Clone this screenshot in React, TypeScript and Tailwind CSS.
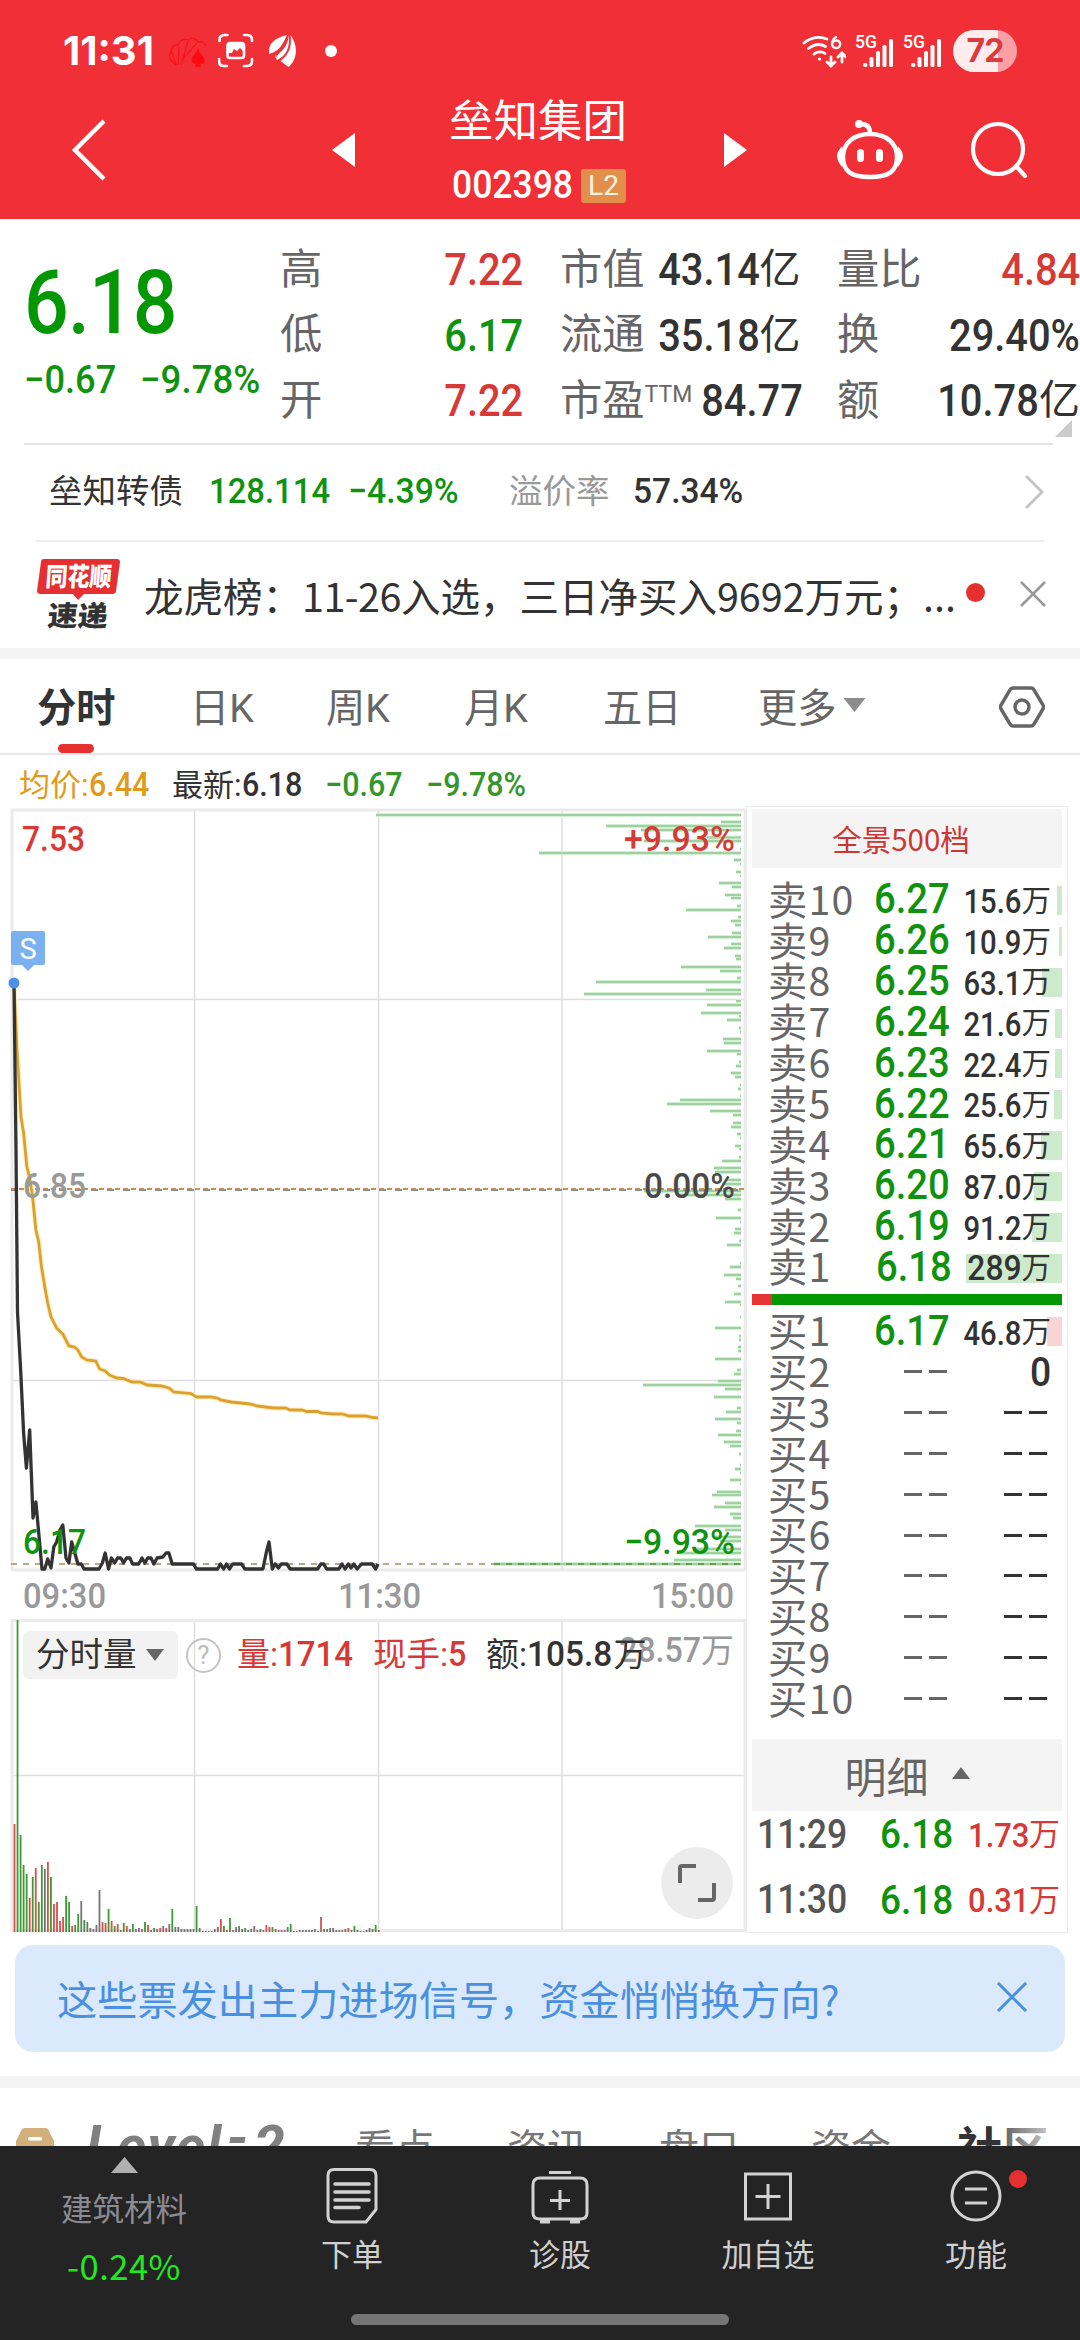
import type { ReactNode } from 'react'

const GREEN = '#0f930f'
const RED = '#d63936'

// [y, left edge] of each order-depth line, all of them end at x = 741
const DEPTH: [number, number][] = [
  [815, 376], [822, 721], [826, 606], [830, 641], [837.5, 707], [841, 644], [849, 740], [853, 539],
  [860, 734], [864, 740], [872, 736], [876, 740], [883, 719], [887, 732], [895, 725], [898, 731],
  [906, 737], [910, 686], [917, 738], [921, 731], [925, 735], [933, 732], [937, 708], [944, 731],
  [948, 724], [956, 735], [959, 736], [967, 681], [971, 720], [978, 737], [982, 596], [990, 706],
  [994, 584], [1001, 736], [1005, 707], [1013, 701], [1016, 739], [1020, 727], [1028, 739], [1032, 740],
  [1039, 723], [1043, 724], [1051, 707], [1054, 737], [1062, 739], [1066, 736], [1073, 731], [1077, 735],
  [1085, 740], [1089, 738], [1096, 740], [1100, 680], [1104, 667], [1111, 710], [1115, 733], [1123, 733],
  [1127, 731], [1134, 737], [1138, 740], [1146, 735], [1149, 739], [1157, 739], [1161, 722], [1168, 714],
  [1172, 715], [1180, 727], [1184, 722], [1191, 644], [1195, 680], [1199, 725], [1210, 738], [1218, 716],
  [1222, 740], [1229, 735], [1233, 734], [1241, 739], [1245, 727], [1263, 740], [1267, 730], [1275, 724],
  [1279, 736], [1286, 738], [1294, 734], [1302, 725], [1305, 740], [1317, 740], [1328, 715], [1336, 739],
  [1340, 739], [1347, 738], [1351, 738], [1359, 715], [1370, 737], [1374, 734], [1381, 718], [1385, 643],
  [1389, 725], [1397, 714], [1408, 737], [1412, 726], [1419, 715], [1423, 737], [1431, 736], [1435, 718],
  [1442, 724], [1446, 730], [1454, 739], [1465, 740], [1469, 735], [1473, 740], [1480, 730], [1484, 740],
  [1492, 717], [1495, 712], [1503, 725], [1507, 714], [1514, 730], [1518, 733], [1526, 695], [1530, 725],
  [1537, 713], [1541, 720], [1549, 697], [1553, 680], [1560, 674], [1564, 494],
]

const PRICE =
  '14,984 16,1150 17.5,1312 20.8,1373 23.6,1433 26.4,1468 29.7,1430 33,1518 35.9,1502 42,1569 44.8,1569 47.7,1559 51,1568 53.8,1547 56.6,1542 60,1530 62.8,1525 66,1558 68.9,1563 71.7,1542 77.9,1564 81.2,1564 84,1569 99,1569 102.4,1563 105.2,1553 108.5,1569 111.4,1558 114.7,1563 117.5,1558 120.8,1558 123.6,1563 126.5,1558 129.8,1558 132.6,1564 138.7,1564 142,1558 144.9,1563 147.7,1558 151,1558 153.8,1564 157.1,1558 162.8,1557 166.1,1553 168.9,1553 172.2,1564 193.5,1564 196.3,1569 217.6,1569 220.4,1564 223.7,1569 226.5,1564 229.4,1569 232.7,1564 241.6,1564 244.9,1569 262.9,1569 266.2,1553 269,1542 272.3,1569 275.1,1564 278.4,1568 281.3,1564 286.9,1564 290.2,1569 317.6,1569 320.9,1564 323.7,1564 326.6,1569 338.8,1569 342.1,1564 345,1569 348.3,1564 351.1,1568 353.9,1564 357.2,1569 361.5,1564 372.3,1564 375.6,1569 378,1564'

const AVERAGE =
  '14,984 17,1050 21,1117 23.6,1133 26.9,1167 29.7,1178 32.6,1197 35.9,1230 38.7,1242 41.5,1267 44.8,1287 47.7,1303 51,1317 56.6,1328 62.8,1334 68.9,1346 74.6,1347 77.9,1350 81.6,1357 86.8,1360 95.8,1361 99.6,1369 105.2,1371 109.5,1375 117,1378 123.2,1378.5 132.1,1382 140.2,1382 147.2,1385 161.4,1386 169,1388 173.7,1392 191.1,1393.5 196.3,1397 211.4,1397 218.5,1398.5 220.4,1400 231.2,1402 250.1,1404 257.2,1406 273.7,1408 285.5,1408 290.2,1410 302,1410 306.7,1411.5 317.6,1411.5 320.9,1413 332.7,1414 342.1,1414 349.2,1416 365.7,1416 372.8,1417.5 378,1418'

// one bar a minute: g = falling, r = rising, k = unchanged
const VOLUME =
  'r108 g312 g97 g67 g58 r34 g55 r64 g30 g67 k63 r70 g55 r28 r30 r11 r15 g36 g30 r6 g7 g18 k31 g12 k10 k4 k3 k7 k42 r10 r9 g23 r11 g6 r8 k2 g9 r6 k3 g8 k3 k4 r3 g10 r7 k2 g4 r3 r4 k6 r4 k8 g23 k5 k5 k3 k3 k3 k3 k3 g26 k4 k1 k1 k1 k1 k3 k5 r13 g6 r2 g14 r2 k5 k6 k3 g4 k2 k3 k6 k2 k3 k2 r7 r5 g5 r3 k2 r2 k2 k5 g8 k1 k1 k2 k2 k2 k2 k2 k3 k1 r15 k3 k3 k4 k4 k2 k2 r2 g3 r4 k2 g6 k2 r1 r1 k2 k4 k3 g7 r2'.split(' ')

const VOLUME_COLORS: Record<string, string> = { r: '#d6504c', g: '#3d9a34', k: '#757575' }

const SELLS = [
  { level: 10, price: '6.27', qty: '15.6', bar: 5 },
  { level: 9, price: '6.26', qty: '10.9', bar: 3 },
  { level: 8, price: '6.25', qty: '63.1', bar: 20 },
  { level: 7, price: '6.24', qty: '21.6', bar: 7 },
  { level: 6, price: '6.23', qty: '22.4', bar: 7 },
  { level: 5, price: '6.22', qty: '25.6', bar: 8 },
  { level: 4, price: '6.21', qty: '65.6', bar: 21 },
  { level: 3, price: '6.20', qty: '87.0', bar: 28 },
  { level: 2, price: '6.19', qty: '91.2', bar: 30 },
  { level: 1, price: '6.18', qty: '289', bar: 96 },
]

interface NumProps {
  children: ReactNode
  className?: string
  scale?: string
  right?: boolean
}

// condensed figures, anchored on the left or on the right
function Num({ children, className = '', scale = 'scale-x-[0.91]', right }: NumProps) {
  return (
    <span className={`inline-block font-medium whitespace-nowrap ${scale} ${right ? 'origin-right' : 'origin-left'} ${className}`}>
      {children}
    </span>
  )
}

function StatusBar() {
  return (
    <div className="h-[98px] pt-[3px] pl-[63px] pr-[63px] flex items-center text-white">
      <span className="w-[106px] text-[40px] leading-none font-bold font-['Inter']">11:31</span>
      <svg className="w-[38px] h-[32px]" viewBox="170 36 38 32" fill="none" stroke="#ff0a10" strokeWidth="1.4">
        <path d="M177 66c-6-4-8-9-5-13 0-5 4-8 7-7 2-5 7-7 10-5 4-3 9-1 10 2 4-1 7 1 8 4M177 66l-4-13M179 66l1-19M182 66l7-24M184 60l14-16" opacity="0.75" />
        <path d="M199 51c-2 5-6 7-6 10 0 3 4 4 5 2l-1 4h4l-1-4c2 2 6 1 5-2 0-3-4-5-6-10z" fill="#ff0a10" />
      </svg>
      <svg className="ml-[11px] w-[36px] h-[36px]" viewBox="219 34 36 36" fill="none" stroke="white" strokeWidth="2.6" strokeLinecap="round">
        <path d="M220.5 42v-1q0-5 5-5h3M245 36h3q5 0 5 5v1M253 60v2q0 5-5 5h-3M228 67h-3q-5 0-5-5v-2" />
        <rect x="228.500" y="44" width="16.500" height="15" rx="2.500" />
        <path d="M229 54v-9h16v8l-4-4-3 3-3-2-2 4z" fill="white" stroke="none" />
      </svg>
      <svg className="ml-[14px] w-[30px] h-[34px]" viewBox="269 34 30 34" fill="white">
        <path d="M288 35C276 38 270 43 270 51v3c8-2 14-8 18-19z" />
        <path d="M290 35c-1 11-8 18-14 21l2 4c9-4 13-12 12-25z" />
        <path d="M291.500 35c2 13-3 21-10 26l8 6c9-8 10-21 2-32z" />
        <path d="M289 35l-12 22" stroke="#f12f37" strokeWidth="1" />
      </svg>
      <span className="ml-[27px] size-[12px] rounded-full bg-white" />
      <svg className="ml-auto w-[46px] h-[36px]" viewBox="801 33 46 36" fill="none" stroke="white" strokeWidth="2.800" strokeLinecap="round">
        <path d="M805 43c7-6 16-7 23-4M809.5 48.500c6-4.500 12-5 17-2M815 54c3-2.500 8-3 11-.5" />
        <circle cx="820.5" cy="59" r="1.600" fill="white" stroke="none" />
        <path d="M837 37c-5 3-5.500 11 0 11 6 0 5-8 0-7.500-2 0-4 2-4 4" strokeWidth="2.400" />
        <path d="M832 57v8M828 62l4 4 4-4M843 62v-8M839 57l4-4 4 4" />
      </svg>
      <Signal />
      <Signal />
      <div className="ml-[11px] w-[64px] h-[42px] rounded-full overflow-hidden bg-[linear-gradient(to_right,#ffeced_70%,#faa0a4_70%)] flex items-center justify-center text-[32px] leading-none font-bold text-[#dc3a41] font-['Inter'] tracking-[-1px]">
        72
      </div>
    </div>
  )
}

function Signal() {
  return (
    <svg className="ml-[9px] w-[39px] h-[36px] overflow-visible" viewBox="856 33 39 36" fill="white">
      <text x="856" y="48" fontSize="18" fontWeight="500" textLength="22" lengthAdjust="spacingAndGlyphs">5G</text>
      <rect x="864" y="63" width="4.500" height="4" rx="2" />
      <rect x="870.5" y="57" width="4" height="10" rx="1.500" />
      <rect x="877" y="51" width="4" height="16" rx="1.500" />
      <rect x="883.5" y="45" width="4" height="22" rx="1.500" />
      <rect x="890" y="39" width="4" height="28" rx="1.500" />
    </svg>
  )
}

function NavBar() {
  return (
    <div className="h-[104px] pl-[70px] pr-[52px] flex items-center">
      <svg className="w-[38px] h-[62px]" viewBox="0 0 38 62" fill="none" stroke="white" strokeWidth="4.500">
        <path d="M34 2L5 31l29 29" />
      </svg>
      <svg className="ml-[224px] w-[23px] h-[34px]" viewBox="0 0 23 34" fill="white">
        <path d="M23 0v34L0 17z" />
      </svg>
      <div className="ml-[94px] mt-[3px] w-[180px] flex flex-col gap-[24px]">
        <h1 className="text-[44.500px] leading-none text-white whitespace-nowrap">垒知集团</h1>
        <div className="h-[35px] pl-[3px] flex items-center">
          <div className="w-[129px] text-[39px] leading-none text-white">
            <Num>002398</Num>
          </div>
          <span className="w-[45px] h-[34px] rounded-[3px] bg-[#e28f4b] flex items-center justify-center text-[28px] leading-none text-[#fff3e4]">L2</span>
        </div>
      </div>
      <svg className="ml-[95px] w-[23px] h-[34px]" viewBox="0 0 23 34" fill="white">
        <path d="M0 0v34l23-17z" />
      </svg>
      <svg className="ml-[90px] w-[67px] h-[62px]" viewBox="837 120 67 62" fill="none" stroke="white" strokeWidth="4.500">
        <path d="M870 135c16 0 27 9 27 23 0 15-9 20-27 20s-27-5-27-20c0-14 11-23 27-23z" />
        <path d="M870 134c0-6-3-9-9-9" />
        <circle cx="859" cy="125" r="4" fill="white" stroke="none" />
        <path d="M841 150q-6 7 0 15zM899 150q6 7 0 15z" fill="white" strokeWidth="2" />
        <path d="M860.500 153.500v6M879.500 153.500v6" strokeWidth="7" strokeLinecap="round" />
      </svg>
      <svg className="ml-auto w-[58px] h-[58px]" viewBox="970 122 58 58" fill="none" stroke="white" strokeWidth="4.200">
        <circle cx="998" cy="150" r="25" />
        <path d="M1016 167l9 10" strokeLinecap="round" />
      </svg>
    </div>
  )
}

function Stat({ label, value, unit, tone = 'text-[#333]' }: { label: ReactNode; value: string; unit?: string; tone?: string }) {
  return (
    <div className="flex items-center justify-between h-[65.500px] whitespace-nowrap">
      <span className="text-[42.300px] leading-none text-[#666]">{label}</span>
      <span className={`flex items-center text-[45px] leading-none ${tone}`}>
        <Num right scale="scale-x-[0.885]">{value}</Num>
        {unit && <span className="text-[41px]">{unit}</span>}
      </span>
    </div>
  )
}

function Quote() {
  return (
    <section className="relative h-[226px] pt-[18px] pl-[24px] flex">
      <div className="w-[256px] pt-[21px] text-[#0f930f] whitespace-nowrap">
        <div className="text-[89px] leading-[90px] text-[#039803]">
          <Num scale="scale-x-[0.885]" className="tracking-[-1px]">6.18</Num>
        </div>
        <div className="mt-[12px] flex text-[39px] leading-[40px]">
          <div className="w-[116px]">
            <Num scale="scale-x-[0.93]">−0.67</Num>
          </div>
          <Num scale="scale-x-[0.94]">−9.78%</Num>
        </div>
      </div>
      <div className="grid grid-cols-[243px_240px_243px] gap-x-[37px] content-start">
        <Stat label="高" value="7.22" tone="text-[#d63936]" />
        <Stat label="市值" value="43.14" unit="亿" />
        <Stat label="量比" value="4.84" tone="text-[#d63936]" />
        <Stat label="低" value="6.17" tone="text-[#0f930f]" />
        <Stat label="流通" value="35.18" unit="亿" />
        <Stat label="换" value="29.40%" />
        <Stat label="开" value="7.22" tone="text-[#d63936]" />
        <Stat label={<>市盈<sup className="mr-[-4px] text-[23px] top-[-13px]">TTM</sup></>} value="84.77" />
        <Stat label="额" value="10.78" unit="亿" />
      </div>
      <svg className="absolute right-[8px] bottom-[8px] w-[17px] h-[17px]" viewBox="0 0 17 17" fill="#ccc">
        <path d="M17 0v17H0z" />
      </svg>
      <div className="absolute left-[24px] right-[27px] bottom-0 h-[2px] bg-[#e3e3e3]" />
    </section>
  )
}

function BondRow() {
  return (
    <section className="h-[97px] mx-[36px] border-b-2 border-[#eee] pl-[13px] pb-[2px] flex items-center text-[35.500px] leading-none whitespace-nowrap">
      <span className="w-[160px] text-[33.500px] text-[#333]">垒知转债</span>
      <div className="w-[139px] text-[#0f930f]"><Num scale="scale-x-[0.925]">128.114</Num></div>
      <div className="w-[161px] text-[#0f930f]"><Num scale="scale-x-[0.95]">−4.39%</Num></div>
      <span className="w-[124px] text-[33.500px] text-[#999]">溢价率</span>
      <div className="text-[#333]"><Num scale="scale-x-[0.945]">57.34%</Num></div>
      <svg className="ml-auto w-[19px] h-[34px]" viewBox="0 0 19 34" fill="none" stroke="#c4c4c4" strokeWidth="3">
        <path d="M1 1l16 16L1 33" />
      </svg>
    </section>
  )
}

function NewsRow() {
  return (
    <section className="h-[106px] pl-[37px] pr-[34px] flex items-center">
      <svg className="mt-[-3px] w-[84px] h-[72px] overflow-visible" viewBox="0 0 84 72">
        <path d="M7 1h73q3 0 3 3l-4 29q0 3-4 3H47l-6 6-5-6H4q-4 0-4-3L4 4q0-3 3-3z" fill="#e52f30" />
        <text x="10" y="28" fontSize="26" fontWeight="900" fill="white" textLength="66" lengthAdjust="spacingAndGlyphs" transform="skewX(-4)">同花顺</text>
        <text x="16" y="68" fontSize="28" fontWeight="900" fill="#333" textLength="60" lengthAdjust="spacingAndGlyphs" transform="skewX(-5)">速递</text>
      </svg>
      <span className="ml-[23px] w-[822px] text-[39.500px] leading-none text-[#333] whitespace-nowrap font-['Noto_Sans_CJK_SC']">
        龙虎榜：<span className="tracking-[-0.500px]">11-26</span>入选，三日净买入9692万元；...
      </span>
      <span className="mt-[-6px] size-[19px] rounded-full bg-[#e63030]" />
      <svg className="ml-auto mt-[-3px] w-[26px] h-[26px]" viewBox="0 0 26 26" stroke="#999" strokeWidth="2.500">
        <path d="M1 1l24 24M25 1L1 25" />
      </svg>
    </section>
  )
}

function PeriodTabs() {
  return (
    <nav className="relative h-[96px] pt-[7px] pl-[37px] pr-[35px] flex items-center border-b-2 border-[#e6e6e6] text-[39.300px] leading-none text-[#666] whitespace-nowrap">
      <span className="w-[153px] font-bold text-[#333]">分时</span>
      <span className="w-[136px]">日K</span>
      <span className="w-[138px]">周K</span>
      <span className="w-[139px]">月K</span>
      <span className="w-[155px]">五日</span>
      <span>更多</span>
      <svg className="ml-[6px] mt-[-9px] w-[23px] h-[14px]" viewBox="0 0 22 14" fill="#8c8c8c">
        <path d="M0 0h22L11 14z" />
      </svg>
      <svg className="ml-auto mt-[-6px] w-[46px] h-[44px]" viewBox="0 0 46 44" fill="none" stroke="#666" strokeWidth="3.500">
        <path d="M14 3h18q2 0 3 2l9 15q1 2 0 4l-9 15q-1 2-3 2H14q-2 0-3-2L2 24q-1-2 0-4l9-15q1-2 3-2z" />
        <circle cx="23" cy="22" r="7" />
      </svg>
      <span className="absolute left-[58px] bottom-0 w-[36px] h-[9px] rounded-full bg-[#e63030]" />
    </nav>
  )
}

function Summary() {
  return (
    <div className="h-[51px] pt-[8px] pl-[19px] flex items-center text-[33.500px] leading-none whitespace-nowrap">
      <div className="w-[153px] text-[#e09a1a]"><span className="text-[31px]">均价:</span><Num>6.44</Num></div>
      <div className="w-[153px] text-[#333]"><span className="text-[31px]">最新:</span><Num>6.18</Num></div>
      <div className="w-[101px] text-[#35952b]"><Num>−0.67</Num></div>
      <div className="text-[#35952b]"><Num>−9.78%</Num></div>
    </div>
  )
}

function Grid({ top, bottom, lines }: { top: number; bottom: number; lines: number[] }) {
  return (
    <g fill="none" stroke="#dedede" strokeWidth="1.500">
      {[194.5, 378.5, 562].map((x) => (
        <path key={x} d={`M${x} ${top}V${bottom}`} />
      ))}
      {lines.map((y) => (
        <path key={y} d={`M12 ${y}H746`} />
      ))}
      <rect x="12" y={top} width="733" height={bottom - top} stroke="#ebebeb" strokeWidth="3" />
    </g>
  )
}

function Label({ x, y, w, fill, children }: { x: number; y: number; w: number; fill: string; children: string }) {
  return (
    <text x={x} y={y} fontSize="35.500" fontWeight="500" fill={fill} textLength={w} lengthAdjust="spacingAndGlyphs">
      {children}
    </text>
  )
}

function PriceChart() {
  return (
    <svg className="block w-[746px] h-[814px]" viewBox="0 806 746 814">
      <Grid top={810} bottom={1570} lines={[999.5, 1380.5]} />
      {DEPTH.map(([y, x]) => (
        <g key={y}>
          <rect x={x} y={y - 2} width={741 - x} height="4" fill="#d2f1d2" />
          <rect x={x} y={y - 1} width={741 - x} height="2" fill="#a0cfa2" />
        </g>
      ))}
      <path d="M11 1190H746" stroke="#8a8a8a" strokeWidth="2" strokeDasharray="7 9" />
      <path d="M11 1189H746" stroke="#cf8a4e" strokeWidth="2" strokeDasharray="5 3" />
      <path d="M11 1564H494" stroke="#b8a888" strokeWidth="2" strokeDasharray="6 6" />
      <path d="M494 1564H741" stroke="#6f9a52" strokeWidth="2" strokeDasharray="6 6" />
      <polyline points={AVERAGE} fill="none" stroke="#fdf0c4" strokeWidth="5" />
      <polyline points={AVERAGE} fill="none" stroke="#dca02c" strokeWidth="2.800" />
      <polyline points={PRICE} fill="none" stroke="#333" strokeWidth="3.300" strokeLinejoin="round" />
      <circle cx="14" cy="983" r="5.500" fill="#4b92e4" />
      <path d="M13 931h30q2 0 2 2v30q0 2-2 2H34l-6 6-6-6H13q-2 0-2-2V933q0-2 2-2z" fill="#7cb1f1" />
      <text x="28" y="959" fontSize="29" fill="white" textAnchor="middle">S</text>
      <Label x={22} y={851} w={63} fill={RED}>7.53</Label>
      <Label x={624} y={851} w={111} fill={RED}>+9.93%</Label>
      <Label x={23} y={1198} w={63} fill="#999">6.85</Label>
      <Label x={644} y={1198} w={91} fill="#4a4a4a">0.00%</Label>
      <Label x={23} y={1554} w={63} fill={GREEN}>6.17</Label>
      <Label x={624} y={1554} w={111} fill={GREEN}>−9.93%</Label>
      <Label x={23} y={1608} w={83} fill="#999">09:30</Label>
      <Label x={338} y={1608} w={83} fill="#999">11:30</Label>
      <Label x={651} y={1608} w={83} fill="#999">15:00</Label>
    </svg>
  )
}

function VolumeChart() {
  return (
    <div className="relative">
      <svg className="block w-[746px] h-[314px]" viewBox="0 1619 746 314">
        <Grid top={1620.5} bottom={1930.5} lines={[1775.5]} />
        {VOLUME.map((bar, i) => {
          const height = Number(bar.slice(1))
          return <rect key={i} x={13.6 + i * 3.035} y={1932 - height} width="1.800" height={height} fill={VOLUME_COLORS[bar[0]]} />
        })}
        <Label x={619} y={1662} w={82} fill="#999">28.57</Label>
        <text x="701" y="1662" fontSize="33" fill="#999">万</text>
      </svg>
      <div className="absolute left-[23px] top-[12px] h-[48px] flex items-center text-[35.500px] leading-none whitespace-nowrap">
        <span className="w-[155px] h-[48px] rounded-md bg-[#f2f2f2] pl-[13px] flex items-center gap-[9px] text-[33.500px] text-[#333]">
          分时量
          <svg className="w-[18px] h-[12px]" viewBox="0 0 18 12" fill="#666">
            <path d="M0 0h18L9 12z" />
          </svg>
        </span>
        <span className="ml-[8px] size-[35px] rounded-full border-[2.500px] border-[#c4c4c4] flex items-center justify-center text-[26px] text-[#bbb]">?</span>
        <div className="ml-[16px] w-[136px] text-[#d63936]"><span className="text-[33px]">量:</span><Num scale="scale-x-[0.93]">1714</Num></div>
        <div className="w-[113px] text-[#d63936]"><span className="text-[33.500px]">现手:</span><Num>5</Num></div>
        <div className="text-[#333]"><span className="text-[33px]">额:</span><Num scale="scale-x-[0.94]">105.8</Num><span className="ml-[-4px] text-[33px]">万</span></div>
      </div>
      <button className="absolute left-[661px] top-[228px] size-[72px] rounded-full bg-[#ececec] flex items-center justify-center">
        <svg className="w-[38px] h-[38px]" viewBox="0 0 38 38" fill="none" stroke="#666" strokeWidth="4">
          <path d="M2 19V4q0-2 2-2h14M36 19v15q0 2-2 2H20" />
        </svg>
      </button>
    </div>
  )
}

function Level({ name, price, qty, unit, children }: { name: string; price?: string; qty: ReactNode; unit?: boolean; children?: ReactNode }) {
  return (
    <div className="relative h-[40.850px] pl-[16px] pr-[11px] flex items-center leading-none whitespace-nowrap">
      {children}
      <span className="relative top-[-2px] w-[108px] text-[39.300px] text-[#666] tracking-[1.200px] font-['Noto_Sans_CJK_SC']">{name}</span>
      {price ? (
        <Num className="relative w-[84px] text-[42px] text-[#0f930f]">{price}</Num>
      ) : (
        <Dashes className="ml-[28px]" color="bg-[#666]" />
      )}
      <span className="relative ml-auto flex items-center text-[#333]">
        {qty}
        {unit && <span className="pt-[4px] text-[29.500px]">万</span>}
      </span>
    </div>
  )
}

function Dashes({ className = '', color }: { className?: string; color: string }) {
  return (
    <span className={`flex gap-[7px] ${className}`}>
      <span className={`w-[18px] h-[3px] ${color}`} />
      <span className={`w-[18px] h-[3px] ${color}`} />
    </span>
  )
}

function OrderBook() {
  return (
    <aside className="w-[322px] h-[1127px] border-[1.500px] border-[#ececec] px-[5px] pt-[2px]">
      <div className="h-[59px] bg-[#f4f4f4] flex items-center justify-center pr-[12px] text-[29.500px] leading-none text-[#cf3532] font-['Noto_Sans_CJK_SC']">全景500档</div>
      <div className="pt-[11px]">
        {SELLS.map((row) => (
          <Level
            key={row.level}
            name={`卖${row.level}`}
            price={row.price}
            qty={
              row.level === 1 ? (
                <Num right className="pt-[2px] text-[35px]">{row.qty}</Num>
              ) : (
                <Num right scale="scale-x-[0.9]" className="pt-[6px] text-[32.500px]">{row.qty}</Num>
              )
            }
            unit
          >
            <span className="absolute right-0 top-[7px] h-[29px] bg-[#cdeacd]" style={{ width: row.bar }} />
          </Level>
        ))}
      </div>
      <div className="mt-[7px] h-[11px] flex">
        <div className="w-[20px] bg-[#e63434]" />
        <div className="flex-1 bg-[#039803]" />
      </div>
      <div className="pt-[5px]">
        <Level name="买1" price="6.17" qty={<Num right scale="scale-x-[0.9]" className="pt-[6px] text-[32.500px]">46.8</Num>} unit>
          <span className="absolute right-0 top-[7px] w-[15px] h-[29px] bg-[#f9d4d4]" />
        </Level>
        <Level name="买2" qty={<Num right className="pt-[2px] text-[41px]">0</Num>} />
        {[3, 4, 5, 6, 7, 8, 9, 10].map((level) => (
          <Level key={level} name={`买${level}`} qty={<Dashes className="mr-[4px]" color="bg-[#333]" />} />
        ))}
      </div>
      <div className="mt-[20px] h-[72px] bg-[#f4f4f4] flex items-center justify-center gap-[23px] pt-[8px] text-[42px] leading-none text-[#666]">
        明细
        <svg className="mt-[-12px] w-[18px] h-[12px]" viewBox="0 0 18 12" fill="#666">
          <path d="M0 12h18L9 0z" />
        </svg>
      </div>
      <Trade time="11:29" price="6.18" qty="1.73" />
      <Trade time="11:30" price="6.18" qty="0.31" />
    </aside>
  )
}

function Trade({ time, price, qty }: { time: string; price: string; qty: string }) {
  return (
    <div className="h-[45px] mb-[20.500px] pt-[3px] pl-[5px] pr-[2px] flex items-center leading-none whitespace-nowrap">
      <div className="w-[127px] text-[40px] text-[#555]"><Num scale="scale-x-[0.89]">{time}</Num></div>
      <Num scale="scale-x-[0.9]" className="text-[41px] text-[#0f930f]">{price}</Num>
      <span className="ml-auto flex items-center text-[34px] text-[#d63936]">
        <Num right>{qty}</Num>
        <span className="text-[31px]">万</span>
      </span>
    </div>
  )
}

function SignalBanner() {
  return (
    <div className="mt-[12px] mx-[15px] h-[107px] rounded-[18px] bg-[#dae9fb] pl-[42px] pr-[37px] flex items-center justify-between">
      <span className="text-[40.200px] leading-none text-[#4a90e0] whitespace-nowrap font-['Noto_Sans_CJK_SC']">这些票发出主力进场信号，资金悄悄换方向?</span>
      <svg className="mt-[-3px] w-[32px] h-[30px]" viewBox="0 0 32 30" stroke="#4a90e0" strokeWidth="3">
        <path d="M2 1l28 28M30 1L2 29" />
      </svg>
    </div>
  )
}

function SectionTabs() {
  return (
    <div className="relative h-[58px] overflow-hidden">
      <div className="pt-[40px] pl-[15px] flex items-start text-[40px] leading-none text-[#777] whitespace-nowrap">
        <svg className="w-[40px] h-[40px]" viewBox="0 0 40 40">
          <path d="M10 0h20q3 0 4 3l5 10v17H1V13L6 3q1-3 4-3z" fill="#d3af7c" />
          <rect x="13" y="9" width="14" height="3.500" rx="1.500" fill="white" />
        </svg>
        <span className="ml-[31px] mt-[-10px] w-[269px] text-[56px] font-bold italic text-[#808080] tracking-[1.500px]">
          Level<span className="relative top-[-8px] mx-[4px]">-</span>2
        </span>
        <span className="mt-[2px] w-[152px]">看点</span>
        <span className="mt-[2px] w-[152px]">资讯</span>
        <span className="mt-[2px] w-[152px]">盘口</span>
        <span className="mt-[2px] w-[146px]">资金</span>
        <span className="mt-[-2px] text-[46px] font-bold text-[#333]">社区</span>
      </div>
      <div className="absolute right-[24px] bottom-0 w-[56px] h-[24px] bg-linear-to-r from-white/20 to-white/80" />
    </div>
  )
}

function NavItem({ label, children }: { label: string; children: ReactNode }) {
  return (
    <div className="w-[208px] pt-[20px] flex flex-col items-center">
      <svg className="w-[60px] h-[60px]" viewBox="0 0 60 60" fill="none" stroke="#d2d2d2" strokeWidth="3">
        {children}
      </svg>
      <span className="mt-[14px] text-[31px] leading-none text-[#d0d0d0] whitespace-nowrap">{label}</span>
    </div>
  )
}

function BottomNav() {
  return (
    <footer className="relative h-[194px] bg-[#242424] flex">
      <div className="w-[248px] pt-[11px] flex flex-col items-center leading-none">
        <svg className="w-[27px] h-[16px]" viewBox="0 0 27 16" fill="#b0b0b0">
          <path d="M0 16h27L13.500 0z" />
        </svg>
        <span className="mt-[22px] text-[31.500px] text-[#8b8b93]">建筑材料</span>
        <span className="mt-[21px] text-[34.500px] text-[#22e822] tracking-[0.500px] font-['Noto_Sans_CJK_SC']">-0.24%</span>
      </div>
      <NavItem label="下单">
        <path d="M12 3.500h36q6 0 6 6v34L44 56H12q-6 0-6-6V9.500q0-6 6-6z" />
        <path d="M13 18h34M13 26h34M13 34h34M13 41.500h24" strokeWidth="3.500" strokeLinecap="round" />
      </NavItem>
      <NavItem label="诊股">
        <path d="M10 12h40q7 0 7 7v28q0 6-7 6H10q-7 0-7-6V19q0-7 7-7zM19 6.500h22M30 24v20M20 34.500h20M10 56h10M40 56h10" />
      </NavItem>
      <NavItem label="加自选">
        <path d="M7.500 8h45v45h-45zM30 18v25M17.500 30.500h25" />
      </NavItem>
      <NavItem label="功能">
        <circle cx="30" cy="30" r="24" />
        <path d="M19 23h22M19 37h22" />
      </NavItem>
      <span className="absolute left-[1009px] top-[24px] size-[18px] rounded-full bg-[#e63030]" />
      <span className="absolute left-[351px] top-[168px] w-[378px] h-[11px] rounded-full bg-[#757575]" />
    </footer>
  )
}

export default function App() {
  return (
    <div className="w-[1080px] h-[2340px] overflow-hidden bg-white flex flex-col font-['Roboto','Noto_Sans_CJK_SC',sans-serif]">
      <header className="h-[219px] shrink-0 bg-[#f12f37]">
        <StatusBar />
        <NavBar />
      </header>
      <Quote />
      <BondRow />
      <NewsRow />
      <div className="h-[11px] bg-[#f4f4f4]" />
      <PeriodTabs />
      <Summary />
      <main className="h-[1127px] flex">
        <div className="w-[746px] h-[1127px]">
          <PriceChart />
          <div className="mt-[-1px]">
            <VolumeChart />
          </div>
        </div>
        <OrderBook />
      </main>
      <SignalBanner />
      <div className="mt-[24px] h-[12px] bg-[#f4f4f4]" />
      <SectionTabs />
      <BottomNav />
    </div>
  )
}
